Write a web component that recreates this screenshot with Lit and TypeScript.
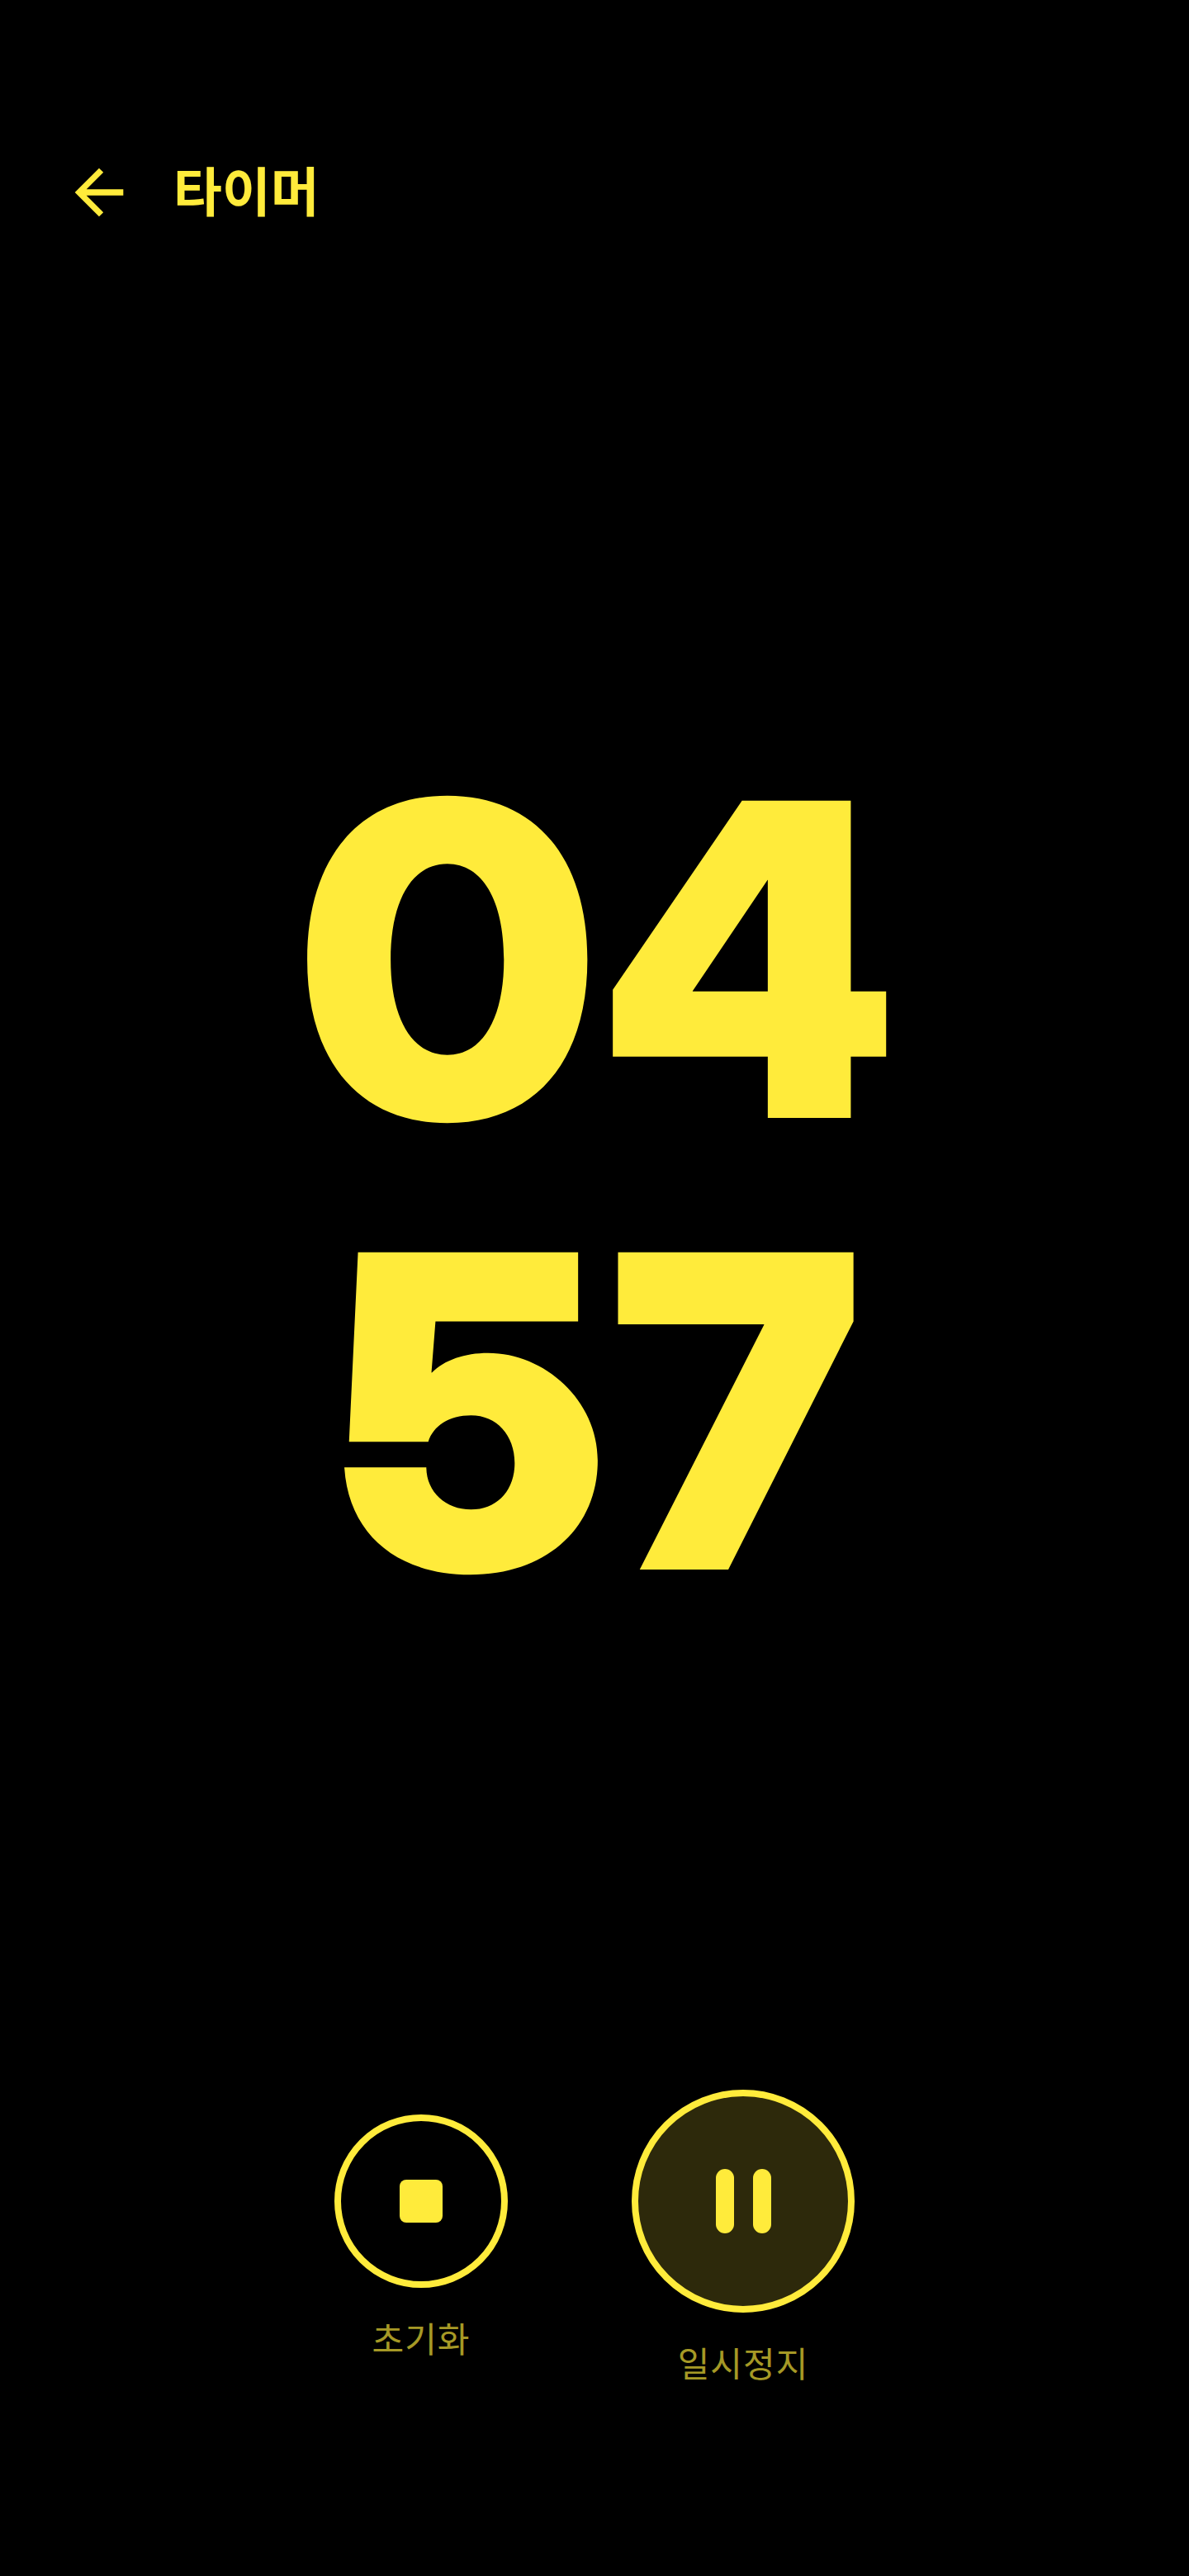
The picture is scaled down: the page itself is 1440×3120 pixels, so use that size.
import { LitElement, html, css } from "lit";
import { customElement } from "lit/decorators.js";

@customElement("app-root")
export class AppRoot extends LitElement {
  static styles = css`
    :host { display: block; }
    .page {
      width: 1440px; height: 3120px; background: #000; color: #ffeb3b;
      display: flex; flex-direction: column; box-sizing: border-box;
      font-family: Inter, "Noto Sans CJK KR", sans-serif;
    }
    .header { display: flex; align-items: center; gap: 46px; padding: 189px 0 0 76px; height: 88px; }
    .back { width: 88px; height: 88px; display: block; fill: #ffeb3b; }
    .title { font: 700 64px/88px Inter, "Noto Sans CJK KR", sans-serif; }
    .digits {
      margin-top: 611px; padding-left: 16px; display: flex; flex-direction: column; align-items: center;
      font-family: "Inter Display", Inter, sans-serif;
      font-weight: 900; font-size: 528px; line-height: 547px; height: 1094px; letter-spacing: 4px;
    }
    .controls { margin-top: 549px; display: flex; justify-content: center; align-items: flex-start; gap: 150px; }
    .control { display: flex; flex-direction: column; align-items: center; gap: 35px; }
    .btn { box-sizing: border-box; border: 8px solid #ffeb3b; border-radius: 50%; display: flex; align-items: center; justify-content: center; }
    .small { width: 210px; height: 210px; margin-top: 30px; }
    .large { width: 270px; height: 270px; background: #2d290b; gap: 23px; }
    .stop { width: 52px; height: 52px; border-radius: 8px; background: #ffeb3b; }
    .bar { width: 22px; height: 78px; border-radius: 11px; background: #ffeb3b; }
    .label { font: 400 42px/50px "Noto Sans CJK KR", sans-serif; letter-spacing: 1px; color: #ffeb3b; opacity: .65; }
  `;
  render() {
    return html`<div class="page">
      <div class="header">
        <svg class="back" viewBox="0 0 24 24"><path d="M20 11H7.83l5.59-5.59L12 4l-8 8 8 8 1.41-1.41L7.83 13H20v-2z"/></svg>
        <div class="title">타이머</div>
      </div>
      <div class="digits"><div>04</div><div>57</div></div>
      <div class="controls">
        <div class="control"><div class="btn small"><div class="stop"></div></div><div class="label">초기화</div></div>
        <div class="control"><div class="btn large"><div class="bar"></div><div class="bar"></div></div><div class="label">일시정지</div></div>
      </div>
    </div>`;
  }
}
